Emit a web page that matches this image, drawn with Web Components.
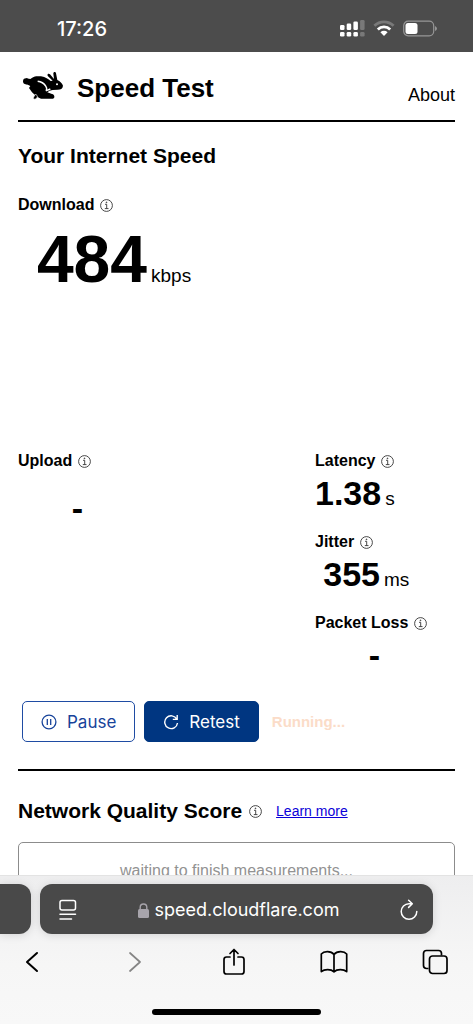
<!DOCTYPE html>
<html lang="en">
<head>
<meta charset="utf-8">
<meta name="viewport" content="width=device-width, initial-scale=1">
<title>Speed Test</title>
<style>
  body { margin: 0; background: #fff; color: #000; font-family: "Liberation Sans", Arial, sans-serif; }
</style>
</head>
<body>
<phone-screen>
  <status-bar slot="top" time="17:26"></status-bar>
  <site-header>Speed Test</site-header>
  <speed-results></speed-results>
  <test-controls></test-controls>
  <quality-score></quality-score>
  <browser-bar slot="bottom" host="speed.cloudflare.com"></browser-bar>
</phone-screen>

<script>
const define = (name, html) => {
  const template = document.createElement('template');
  template.innerHTML = html;
  customElements.define(name, class extends HTMLElement {
    constructor() {
      super();
      this.attachShadow({ mode: 'open' }).append(template.content.cloneNode(true));
    }
    connectedCallback() {
      this.shadowRoot.querySelectorAll('[data-attr]').forEach(node => {
        node.textContent = this.getAttribute(node.dataset.attr) || '';
      });
    }
  });
};

define('phone-screen', `
  <style>
    :host { display: flex; flex-direction: column; height: 100vh; overflow: hidden; }
    main { flex: 1; min-height: 0; overflow: hidden; padding: 0 18px; }
  </style>
  <slot name="top"></slot>
  <main><slot></slot></main>
  <slot name="bottom"></slot>
`);

define('status-bar', `
  <style>
    :host { display: flex; justify-content: space-between; align-items: center; flex: none; height: 52px;
      box-sizing: border-box; padding: 5px 36px 0 57px; background: #4c4c4c; color: #fff; }
    time { font: 500 20px/24px Inter, sans-serif; }
    div { display: flex; align-items: center; gap: 8px; }
    svg { display: block; }
  </style>
  <time data-attr="time"></time>
  <div>
    <svg width="25" height="17" viewBox="0 0 25 17" fill="#fff" role="img" aria-label="Signal">
      <rect y="5" width="4.5" height="5" rx="1.3"/><rect x="6.7" y="3.5" width="4.5" height="6.5" rx="1.3"/><rect x="13.4" y="1.5" width="4.5" height="8.5" rx="1.3"/>
      <rect y="12" width="4.5" height="4.5" rx="1.3"/><rect x="6.7" y="12" width="4.5" height="4.5" rx="1.3"/><rect x="13.4" y="12" width="4.5" height="4.5" rx="1.3"/>
      <g fill="#797979"><rect x="20.1" width="4.5" height="10" rx="1.3"/><rect x="20.1" y="12" width="4.5" height="4.5" rx="1.3"/></g>
    </svg>
    <svg width="22" height="17" viewBox="0 0 22 17" fill="none" stroke-width="2.8" role="img" aria-label="Wi-Fi">
      <path d="M1.4 5.8a13.6 13.6 0 0 1 19.2 0" stroke="#797979"/>
      <path d="M4.8 9.4a8.8 8.8 0 0 1 12.4 0" stroke="#fff"/>
      <path d="M7.4 12.2a5.1 5.1 0 0 1 7.2 0L11 16z" fill="#fff"/>
    </svg>
    <svg width="34" height="17" viewBox="0 0 34 17" role="img" aria-label="Battery">
      <rect x=".7" y="1.2" width="30" height="14.6" rx="4.5" fill="none" stroke="#969696" stroke-width="1.2"/>
      <rect x="2.5" y="3" width="12" height="11" rx="2.5" fill="#fff"/>
      <path d="M32 6v5q2-1 2-2.500T32 6" fill="#969696"/>
    </svg>
  </div>
`);

define('site-header', `
  <style>
    :host { display: block; }
    header { display: flex; align-items: center; justify-content: space-between; height: 68px; border-bottom: 2px solid #000; }
    .brand { display: flex; align-items: center; gap: 14px; padding: 4px 0 0 5px; }
    svg { display: block; margin-bottom: 5px; }
    h1 { margin: 0; font-size: 26px; line-height: 32px; }
    a { padding-top: 18px; color: #000; font-size: 18px; line-height: 24px; text-decoration: none; }
  </style>
  <header>
    <div class="brand">
      <svg width="40" height="28" viewBox="0 0 120 84" aria-hidden="true">
        <circle cx="9" cy="28" r="9"/>
        <path d="M9 19L22 21C32 12 42 12 54 13C68 15 76 22 83 27L89 26L75 13C71 7 76 3 81 7L93 21L91 5C91-1 98-1 99 4L103 24C111 28 118 34 120 41C119 50 113 53 104 53L89 54Q78 55 73 61L87 66C95 67 97 79 89 80L54 80C46 78 37 70 27 61L18 48L22 42Q14 37 8 37z"/>
        <path d="M44 28Q60 30 68 42Q73 48 70 56L82 51" fill="none" stroke="#fff" stroke-width="4.500" stroke-linejoin="round"/>
        <circle cx="102" cy="37" r="3" fill="#fff"/>
        <path d="M38 66Q46 73 42 78L36 82Q28 81 32 75z" stroke="#fff" stroke-width="2"/>
      </svg>
      <h1><slot></slot></h1>
    </div>
    <a href="#about">About</a>
  </header>
`);

define('info-tip', `
  <style>
    :host { display: inline-flex; }
    button { display: block; padding: 0; border: 0; background: none; color: #333; }
    svg { display: block; }
  </style>
  <button type="button" aria-label="More information">
    <svg width="13" height="13" viewBox="0 0 13 13" fill="none" stroke="currentColor" stroke-width=".9">
      <circle cx="6.500" cy="6.500" r="5.900"/><path d="M5 5.300h1.700v4.200M4.800 9.600h3.700"/><circle cx="6.500" cy="3.300" r=".4" fill="currentColor"/>
    </svg>
  </button>
`);

define('speed-metric', `
  <style>
    :host { display: block; --size: 34px; --line: 40px; --box: 65px; }
    :host([large]) { --size: 66px; --line: 84px; --box: 129px; }
    :host([tall]) { --line: 70px; }
    h3 { display: flex; align-items: center; gap: 6px; margin: 0; font-size: 16px; line-height: 24px; }
    p { display: flex; align-items: baseline; gap: 4px; margin: 0; }
    b { min-width: var(--box); font-size: var(--size); line-height: var(--line); text-align: right; }
    .unit { font-size: 19px; line-height: 24px; }
  </style>
  <h3><span data-attr="name"></span><info-tip></info-tip></h3>
  <p><b data-attr="value"></b><span class="unit" data-attr="unit"></span></p>
`);

define('speed-results', `
  <style>
    :host { display: block; }
    h2 { margin: 20px 0 23px; font-size: 21px; line-height: 28px; }
    .grid { display: grid; grid-template-columns: minmax(0, 1fr) 140px; row-gap: 148px; }
    .download { grid-column: 1 / -1; }
    .side { display: grid; gap: 17px; }
  </style>
  <h2>Your Internet Speed</h2>
  <div class="grid">
    <speed-metric class="download" large name="Download" value="484" unit="kbps"></speed-metric>
    <speed-metric tall name="Upload" value="-"></speed-metric>
    <div class="side">
      <speed-metric name="Latency" value="1.38" unit="s"></speed-metric>
      <speed-metric name="Jitter" value="355" unit="ms"></speed-metric>
      <speed-metric name="Packet Loss" value="-"></speed-metric>
    </div>
  </div>
`);

define('test-controls', `
  <style>
    :host { display: flex; align-items: center; gap: 9px; padding: 26px 4px 27px; border-bottom: 2px solid #000; }
    button { display: flex; align-items: center; gap: 10px; height: 41px; box-sizing: border-box; padding: 0 18px;
      border: 1px solid #1f4ca3; border-radius: 5px; background: #fff; color: #17439a; font: 17px/24px Inter, sans-serif; }
    .primary { background: #003681; border-color: #003681; color: #fff; }
    svg { display: block; }
    output { padding-left: 4px; color: #fbdcc8; font-size: 15px; font-weight: bold; }
  </style>
  <button type="button">
    <svg width="16" height="16" viewBox="0 0 16 16" fill="none" stroke="currentColor" stroke-width="1.300"><circle cx="8" cy="8" r="6.900"/><path d="M6.300 5v6M9.700 5v6"/></svg>
    Pause
  </button>
  <button type="button" class="primary">
    <svg width="16" height="16" viewBox="0 0 16 16" fill="none" stroke="currentColor" stroke-width="1.400"><path d="M13.800 5.200A6.400 6.400 0 1 0 14.500 9M14.200 1v4.400H9.800"/></svg>
    Retest
  </button>
  <output>Running...</output>
`);

define('quality-score', `
  <style>
    :host { display: block; padding-top: 26px; }
    div { display: flex; align-items: center; gap: 7px; }
    h2 { margin: 0; font-size: 21px; line-height: 28px; }
    a { margin-left: 7px; color: #0b00d8; font-size: 14px; line-height: 20px; }
    p { height: 96px; margin: 17px 0 0; padding-top: 16px; border: 1px solid #8c8c8c; border-radius: 5px;
      color: #929292; font-size: 16px; line-height: 24px; text-align: center; }
  </style>
  <div><h2>Network Quality Score</h2><info-tip></info-tip><a href="#learn">Learn more</a></div>
  <p>waiting to finish measurements...</p>
`);

define('browser-bar', `
  <style>
    :host { display: block; flex: none; background: linear-gradient(#eeeeef, #f6f6f6 60%, #f8f8f8); border-top: 1px solid #e3e3e3; }
    button { display: block; padding: 0; border: 0; background: none; color: #000; }
    svg { display: block; margin: auto; }
    .tabs { display: flex; gap: 9px; padding: 8px 40px 0 0; }
    .tab { background: #494949; border-radius: 12px; height: 50px; box-shadow: 0 1px 10px #0002; }
    .previous { width: 31px; border-radius: 0 12px 12px 0; }
    .current { flex: 1; display: flex; align-items: center; justify-content: space-between; padding: 2px 15px 0 18px; box-sizing: border-box; }
    .current button { color: #fff; }
    .current .address { display: flex; align-items: center; gap: 6px; font: 18px/24px Inter, sans-serif; }
    nav { display: flex; justify-content: space-between; align-items: center; height: 56px; padding: 0 24px 0 18px; }
    nav button { width: 28px; }
    .home { width: 169px; height: 6px; margin: 19px auto 9px; border-radius: 3px; background: #000; }
  </style>
  <div class="tabs">
    <button type="button" class="tab previous" aria-label="Previous tab"></button>
    <div class="tab current">
      <button type="button" aria-label="Page menu">
        <svg width="19" height="22" viewBox="0 0 19 22" fill="none" stroke="#fff" stroke-width="1.500" stroke-linecap="round"><rect x="2" y="1.500" width="15.500" height="9.500" rx="2"/><path d="M2 15.300h15.500M2 20h11.500"/></svg>
      </button>
      <button type="button" class="address">
        <svg width="11" height="15" viewBox="0 0 11 15" aria-hidden="true"><rect y="6" width="11" height="9" rx="1.500" fill="#a7a4ab"/><path d="M2.200 7V4.300a3.300 3.300 0 0 1 6.600 0V7" fill="none" stroke="#a7a4ab" stroke-width="1.400"/></svg>
        <span data-attr="host"></span>
      </button>
      <button type="button" aria-label="Reload">
        <svg width="18" height="22" viewBox="0 0 18 22" fill="none" stroke="#fff" stroke-width="1.500" stroke-linecap="round" stroke-linejoin="round"><path d="M12 4.700H9A7.800 7.800 0 1 0 16.800 12.500M8.600 1.200L12.300 4.700L8.600 8.400"/></svg>
      </button>
    </div>
  </div>
  <nav>
    <button type="button" aria-label="Back"><svg width="16" height="22" viewBox="0 0 16 22" fill="none" stroke="#000" stroke-width="2" stroke-linecap="round" stroke-linejoin="round"><path d="M13 2L3 11L13 20"/></svg></button>
    <button type="button" aria-label="Forward"><svg width="16" height="22" viewBox="0 0 16 22" fill="none" stroke="#858585" stroke-width="1.700" stroke-linecap="round" stroke-linejoin="round"><path d="M5 2L15 11L5 20"/></svg></button>
    <button type="button" aria-label="Share"><svg width="24" height="28" viewBox="0 0 24 28" fill="none" stroke="#000" stroke-width="1.700" stroke-linecap="round" stroke-linejoin="round"><path d="M8 9H4.500Q2 9 2 11.500V23.500Q2 26 4.500 26H19.500Q22 26 22 23.500V11.500Q22 9 19.500 9H16M12 17V1.500M8 5.500L12 1.500L16 5.500"/></svg></button>
    <button type="button" aria-label="Bookmarks"><svg width="28" height="24" viewBox="0 0 28 24" fill="none" stroke="#000" stroke-width="1.700" stroke-linejoin="round"><path d="M14 4.500C11 .8 4 .8 1.300 4V21.600C4.500 19 11 19 14 21.800C17 19 23.500 19 26.700 21.600V4C24 .8 17 .8 14 4.500V21.800"/></svg></button>
    <button type="button" aria-label="Tabs"><svg width="26" height="26" viewBox="0 0 26 26" fill="none" stroke="#000" stroke-width="1.700"><path d="M6.500 19.500H4.500Q1.500 19.500 1.500 16.500V4.500Q1.500 1.500 4.500 1.500H16.500Q19.500 1.500 19.500 4.500V6.500"/><rect x="7.500" y="7" width="17.500" height="17.500" rx="3"/></svg></button>
  </nav>
  <div class="home"></div>
`);
</script>
</body>
</html>
